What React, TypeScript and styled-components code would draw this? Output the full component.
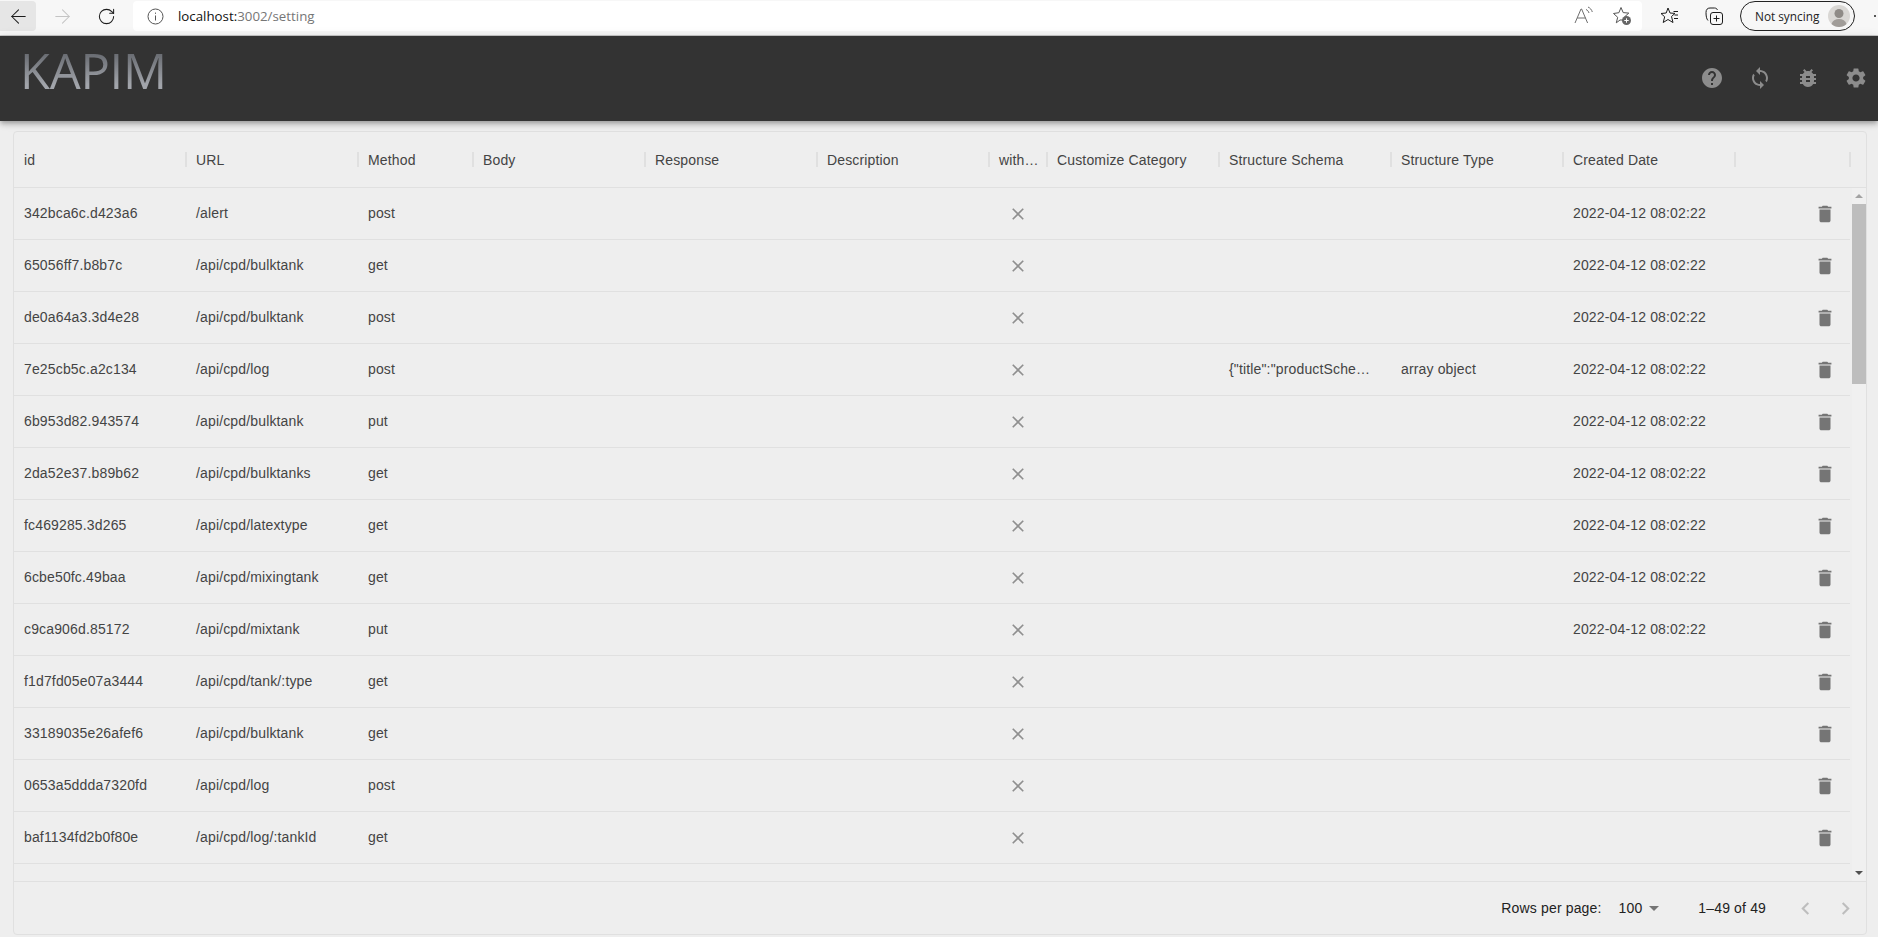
import styled, { createGlobalStyle } from "styled-components";
import { ArrowLeft, ArrowRight, RotateCw } from "lucide-react";
import {
  MdBugReport,
  MdChevronLeft,
  MdChevronRight,
  MdClose,
  MdDelete,
  MdHelp,
  MdSettings,
  MdSync,
} from "react-icons/md";

const COLUMNS = "172px 172px 115px 172px 172px 172px 58px 172px 172px 172px 172px 115px";

const GlobalStyle = createGlobalStyle`
  html, body {
    margin: 0;
    height: 937px;
    overflow: hidden;
    background: #eeeeee;
    font-family: "Liberation Sans", Arial, sans-serif;
  }
`;

// browser chrome
const BrowserBar = styled.div`
  height: 35px;
  display: flex;
  align-items: flex-start;
  background: #f7f7f7;
  border-bottom: 1px solid #c9c9c9;
  overflow: hidden;

  & > * {
    flex: none;
  }
`;

const NavButton = styled.div<{ $active?: boolean; $faded?: boolean }>`
  width: 36px;
  height: 30px;
  margin: 1px 8px 0 0;
  display: flex;
  align-items: center;
  justify-content: center;
  border-radius: 0 4px 4px 0;
  background: ${(p) => (p.$active ? "#e6e6e6" : "transparent")};
  color: ${(p) => (p.$faded ? "#c4c4c4" : "#1c1c1c")};
`;

const AddressBar = styled.div`
  width: 1509px;
  height: 30px;
  margin: 1px 0 0 1px;
  padding: 0 0 0 14px;
  box-sizing: border-box;
  display: flex;
  align-items: center;
  background: #ffffff;
  border-radius: 4px;
`;

const Url = styled.span`
  margin-left: 14px;
  font-family: "Open Sans", sans-serif;
  font-size: 13.3px;
  color: #767676;
`;

const Host = styled.span`
  color: #111111;
`;

const AddressActions = styled.div`
  margin-left: auto;
  display: flex;
  align-items: center;
  gap: 17px;
  padding-right: 10px;
`;

const ToolIcons = styled.div`
  display: flex;
  align-items: center;
  gap: 24px;
  margin: 2px 0 0 18px;
  height: 28px;
`;

const SyncPill = styled.div`
  width: 115px;
  height: 30px;
  margin: 1px 0 0 16px;
  box-sizing: border-box;
  display: flex;
  align-items: center;
  justify-content: space-between;
  padding: 0 4px 0 14px;
  border: 1px solid #222222;
  border-radius: 15px;
  font-family: "Open Sans", sans-serif;
  font-size: 11.8px;
  color: #222222;
`;

const MoreDot = styled.span`
  width: 2px;
  height: 2px;
  margin: 15px 0 0 19px;
  border-radius: 50%;
  background: #222222;
`;

// app header
const AppBar = styled.header`
  position: relative;
  height: 85px;
  display: flex;
  justify-content: space-between;
  align-items: flex-start;
  background: #333333;
  box-shadow: 0 2px 4px -1px rgba(0, 0, 0, 0.2), 0 4px 5px 0 rgba(0, 0, 0, 0.14),
    0 1px 10px 0 rgba(0, 0, 0, 0.12);
`;

const Logo = styled.div`
  margin: 2px 0 0 20px;
  font-family: "Open Sans", sans-serif;
  font-size: 49px;
  line-height: 65px;
  letter-spacing: -0.3px;
  background: linear-gradient(180deg, #6a6d73 25%, #a2a5ab 72%);
  -webkit-background-clip: text;
  background-clip: text;
  color: transparent;
`;

const BarIcons = styled.div`
  display: flex;
  gap: 24px;
  padding: 30px 10px 0 0;
  color: #8c8c8c;
`;

const BarIcon = styled.span`
  display: flex;
  width: 24px;
  height: 24px;
  align-items: center;
  justify-content: center;
`;

// data grid
const Main = styled.main`
  padding: 10px 11px 0 13px;
`;

const Grid = styled.section`
  height: 804px;
  box-sizing: border-box;
  display: flex;
  flex-direction: column;
  border: 1px solid #e0e0e0;
  border-radius: 4px;
  font-size: 14px;
  letter-spacing: 0.01071em;
  color: #444444;
`;

const HeaderRow = styled.div`
  height: 56px;
  flex: none;
  box-sizing: border-box;
  display: grid;
  grid-template-columns: ${COLUMNS};
  border-bottom: 1px solid #e0e0e0;
`;

const HeaderCell = styled.div`
  position: relative;
  display: flex;
  align-items: center;
  padding: 0 10px;
  white-space: nowrap;
  color: #444444;

  &::after {
    content: "";
    position: absolute;
    right: -1px;
    top: 20px;
    width: 2px;
    height: 15px;
    background: #e0e0e0;
  }
`;

const GridBody = styled.div`
  flex: 1;
  min-height: 0;
  display: flex;
`;

const Rows = styled.div`
  width: 1836px;
  overflow: hidden;
`;

const Row = styled.div`
  height: 52px;
  box-sizing: border-box;
  display: grid;
  grid-template-columns: ${COLUMNS};
  border-bottom: 1px solid #e0e0e0;
`;

const Cell = styled.div<{ $align?: "center" | "end" }>`
  min-width: 0;
  display: flex;
  align-items: center;
  justify-content: ${(p) => p.$align ?? "flex-start"};
  padding: 0 ${(p) => (p.$align === "end" ? "14px" : "10px")} 0 10px;
  overflow: hidden;
`;

const CellText = styled.span`
  margin-bottom: 1px;
  white-space: nowrap;
`;

const ScrollTrack = styled.div`
  width: 14px;
  margin-left: 2px;
  display: flex;
  flex-direction: column;
  align-items: center;
  background: #f0f0f0;
`;

const ScrollArrow = styled.span<{ $down?: boolean }>`
  flex: none;
  width: 0;
  height: 0;
  margin: 6px 0 6px;
  border-left: 4px solid transparent;
  border-right: 4px solid transparent;
  border-${(p) => (p.$down ? "top" : "bottom")}: 4px solid
    ${(p) => (p.$down ? "#505050" : "#a3a3a3")};
`;

const ScrollThumb = styled.div`
  flex: none;
  width: 100%;
  height: 180px;
  background: #bdbdbd;
`;

const ScrollGap = styled.div`
  flex: 1;
`;

const Footer = styled.footer`
  height: 52px;
  flex: none;
  display: flex;
  align-items: center;
  justify-content: flex-end;
  border-top: 1px solid #e0e0e0;
  color: #222222;
  font-size: 14px;
  letter-spacing: 0.01071em;
`;

const PageSize = styled.span`
  display: flex;
  align-items: center;
  margin: 0 39px 0 17px;
`;

const CaretDown = styled.span`
  width: 0;
  height: 0;
  margin-left: 7px;
  border-left: 5px solid transparent;
  border-right: 5px solid transparent;
  border-top: 5px solid #757575;
`;

const Pager = styled.span`
  display: flex;
  gap: 15px;
  margin: 0 8px 0 27px;
  color: #bdbdbd;
`;

const rows: string[][] = [
  ["342bca6c.d423a6", "/alert", "post"],
  ["65056ff7.b8b7c", "/api/cpd/bulktank", "get"],
  ["de0a64a3.3d4e28", "/api/cpd/bulktank", "post"],
  ["7e25cb5c.a2c134", "/api/cpd/log", "post", '{"title":"productSche…', "array object"],
  ["6b953d82.943574", "/api/cpd/bulktank", "put"],
  ["2da52e37.b89b62", "/api/cpd/bulktanks", "get"],
  ["fc469285.3d265", "/api/cpd/latextype", "get"],
  ["6cbe50fc.49baa", "/api/cpd/mixingtank", "get"],
  ["c9ca906d.85172", "/api/cpd/mixtank", "put"],
  ["f1d7fd05e07a3444", "/api/cpd/tank/:type", "get"],
  ["33189035e26afef6", "/api/cpd/bulktank", "get"],
  ["0653a5ddda7320fd", "/api/cpd/log", "post"],
  ["baf1134fd2b0f80e", "/api/cpd/log/:tankId", "get"],
];

const headers = [
  "id",
  "URL",
  "Method",
  "Body",
  "Response",
  "Description",
  "with…",
  "Customize Category",
  "Structure Schema",
  "Structure Type",
  "Created Date",
  "",
];

const DATED_ROWS = 9;

function InfoIcon() {
  return (
    <svg width="17" height="17" viewBox="0 0 17 17" fill="none" stroke="#555" strokeWidth="1">
      <circle cx="8.5" cy="8.5" r="7.5" />
      <path d="M8.5 7.5v5M8.5 4.6v1.2" />
    </svg>
  );
}

function ReadAloudIcon() {
  return (
    <svg width="22" height="20" viewBox="0 0 22 20" fill="none" stroke="#6e6e6e" strokeWidth="1">
      <path d="M2 17 8 3h.6l6 14M4.2 12h8.4" />
      <path d="M13 3.5c1.5.6 2.5 1.800 3 3.500M15 1c2.200 1 3.700 2.800 4.300 5" />
    </svg>
  );
}

function StarAddIcon() {
  return (
    <svg width="20" height="20" viewBox="0 0 20 20" fill="none" stroke="#555" strokeWidth="1">
      <path d="M9 1.500 11.200 6.600 16.800 7.100 12.600 10.800 13 14H8l-3.700 2.800 1.400-5.500L1.500 7.500l5.400-.8z" />
      <circle cx="14.500" cy="14.500" r="4.500" fill="#666" stroke="none" />
      <path d="M14.500 12.300v4.400M12.300 14.500h4.400" stroke="#fff" />
    </svg>
  );
}

function FavoritesIcon() {
  return (
    <svg width="20" height="20" viewBox="0 0 20 20" fill="none" stroke="#1c1c1c" strokeWidth="1">
      <path d="M8 2 10 7 15 7.400 11.500 10.500 13 16.500 8 13.500 3.200 16.500 4.700 10.800 1 7.500 6.200 7z" />
      <path d="M13.500 5.500H18M14.500 9H18M14 12.500H18" />
    </svg>
  );
}

function CollectionsIcon() {
  return (
    <svg width="20" height="20" viewBox="0 0 20 20" fill="none" stroke="#1c1c1c" strokeWidth="1">
      <path d="M4 14.500C2.500 13 2 10 2 6.500 2 3.500 3.500 2 6 2h4.500c1.500 0 2.500.8 3 2" />
      <rect x="6.500" y="6.500" width="12" height="12" rx="2.500" />
      <path d="M12.500 9.500v6M9.500 12.500h6" />
    </svg>
  );
}

function AvatarIcon() {
  return (
    <svg width="22" height="22" viewBox="0 0 22 22">
      <circle cx="11" cy="11" r="11" fill="#d9d7d4" />
      <circle cx="11" cy="8.500" r="4.500" fill="#8f8b87" />
      <path d="M3.500 19c1-3.500 3.800-5 7.500-5s6.500 1.500 7.500 5c-2 2-4.500 3-7.500 3s-5.500-1-7.500-3z" fill="#a09c98" />
    </svg>
  );
}

export default function App() {
  return (
    <>
      <GlobalStyle />
      <BrowserBar>
        <NavButton $active>
          <ArrowLeft size={23} strokeWidth={1.1} />
        </NavButton>
        <NavButton $faded>
          <ArrowRight size={23} strokeWidth={1.1} />
        </NavButton>
        <NavButton>
          <RotateCw size={19} strokeWidth={1.3} />
        </NavButton>
        <AddressBar>
          <InfoIcon />
          <Url>
            <Host>localhost:</Host>3002/setting
          </Url>
          <AddressActions>
            <ReadAloudIcon />
            <StarAddIcon />
          </AddressActions>
        </AddressBar>
        <ToolIcons>
          <FavoritesIcon />
          <CollectionsIcon />
        </ToolIcons>
        <SyncPill>
          Not syncing
          <AvatarIcon />
        </SyncPill>
        <MoreDot />
      </BrowserBar>

      <AppBar>
        <Logo>KAPIM</Logo>
        <BarIcons>
          <BarIcon>
            <MdHelp size={24} />
          </BarIcon>
          <BarIcon>
            <MdSync size={24} />
          </BarIcon>
          <BarIcon>
            <MdBugReport size={24} />
          </BarIcon>
          <BarIcon>
            <MdSettings size={24} />
          </BarIcon>
        </BarIcons>
      </AppBar>

      <Main>
        <Grid>
          <HeaderRow>
            {headers.map((h, i) => (
              <HeaderCell key={i}>{h}</HeaderCell>
            ))}
          </HeaderRow>
          <GridBody>
            <Rows>
              {rows.map((r, i) => (
                <Row key={r[0]}>
                  <Cell>
                    <CellText>{r[0]}</CellText>
                  </Cell>
                  <Cell>
                    <CellText>{r[1]}</CellText>
                  </Cell>
                  <Cell>
                    <CellText>{r[2]}</CellText>
                  </Cell>
                  <Cell />
                  <Cell />
                  <Cell />
                  <Cell $align="center">
                    <MdClose size={20} color="#8f8f8f" />
                  </Cell>
                  <Cell />
                  <Cell>
                    <CellText>{r[3]}</CellText>
                  </Cell>
                  <Cell>
                    <CellText>{r[4]}</CellText>
                  </Cell>
                  <Cell>
                    <CellText>{i < DATED_ROWS ? "2022-04-12 08:02:22" : ""}</CellText>
                  </Cell>
                  <Cell $align="end">
                    <MdDelete size={22} color="#757575" />
                  </Cell>
                </Row>
              ))}
            </Rows>
            <ScrollTrack>
              <ScrollArrow />
              <ScrollThumb />
              <ScrollGap />
              <ScrollArrow $down />
            </ScrollTrack>
          </GridBody>
          <Footer>
            Rows per page:
            <PageSize>
              100
              <CaretDown />
            </PageSize>
            1–49 of 49
            <Pager>
              <MdChevronLeft size={25} />
              <MdChevronRight size={25} />
            </Pager>
          </Footer>
        </Grid>
      </Main>
    </>
  );
}
